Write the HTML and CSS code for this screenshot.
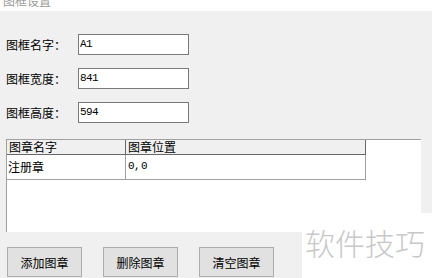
FILE: index.html
```html
<!DOCTYPE html>
<html lang="zh-CN">
<head>
  <meta charset="UTF-8">
  <title>图框设置</title>
  <link rel="stylesheet" href="styles.css">
</head>
<body>
  <div class="titlebar"><span class="title">图框设置</span></div>

  <div class="form">
    <div class="row">
      <label>图框名字：</label>
      <div class="input">A1</div>
    </div>
    <div class="row">
      <label>图框宽度：</label>
      <div class="input">841</div>
    </div>
    <div class="row">
      <label>图框高度：</label>
      <div class="input">594</div>
    </div>
  </div>

  <div class="listview">
    <div class="grid">
      <div class="head">图章名字</div>
      <div class="head last">图章位置</div>
      <div class="cell">注册章</div>
      <div class="cell last">0, 0</div>
    </div>
  </div>

  <div class="buttons">
    <button>添加图章</button>
    <button>删除图章</button>
    <button>清空图章</button>
  </div>

  <div class="watermark">软件技巧</div>
</body>
</html>
```

FILE: styles.css
```css
body {
  margin: 0;
  width: 432px;
  height: 278px;
  overflow: hidden;
  background-color: #f0f0f0;
  font-family: "Noto Sans CJK SC", sans-serif;
  font-size: 12px;
  color: #000;
  position: relative;
}
.titlebar {
  height: 11px;
  background-color: #fff;
  overflow: hidden;
  padding-left: 3px;
}
.title {
  display: block;
  margin-top: -6px;
  line-height: 14px;
  color: #9a9a9a;
}
.form {
  display: flex;
  flex-direction: column;
  gap: 13px;
  padding: 23px 0 0 6px;
}
.row {
  display: flex;
  align-items: center;
  height: 21px;
}
.row label {
  width: 72px;
}
.input {
  box-sizing: border-box;
  width: 111px;
  height: 21px;
  border: 1px solid #7a7a7a;
  background-color: #fff;
  padding: 0 1px;
  font-family: "Liberation Mono", monospace;
  font-size: 11px;
  letter-spacing: -0.6px;
  line-height: 19px;
}
.listview {
  box-sizing: border-box;
  margin: 16px 0 0 6px;
  width: 415px;
  height: 93px;
  background-color: #fff;
  border-top: 1px solid #a0a0a0;
  border-left: 1px solid #a0a0a0;
}
.grid {
  display: grid;
  grid-template-columns: 119px 240px;
  grid-template-rows: 15px 25px;
}
.head {
  background-color: #f0f0f0;
  border-bottom: 1px solid #696969;
  border-right: 1px solid #696969;
  padding-left: 2px;
  line-height: 14px;
}
.cell {
  border-bottom: 1px solid #a0a0a0;
  border-right: 1px solid #a0a0a0;
  padding-left: 1px;
  line-height: 23px;
}
.cell.last {
  font-family: "Liberation Mono", monospace;
  font-size: 11px;
  letter-spacing: -0.6px;
  word-spacing: -5px;
  padding-left: 2px;
}
.buttons {
  display: flex;
  gap: 21px;
  padding: 15px 0 0 7px;
}
button {
  box-sizing: border-box;
  width: 75px;
  height: 30px;
  background-color: #e1e1e1;
  border: 1px solid #adadad;
  font-family: "Noto Sans CJK SC", sans-serif;
  font-size: 12px;
  color: #000;
  padding: 0;
}
.watermark {
  position: absolute;
  left: 302px;
  top: 213px;
  width: 130px;
  height: 65px;
  background-color: #fff;
  color: #c8c8c8;
  font-size: 30px;
  font-weight: 300;
  line-height: 58px;
  padding-left: 3px;
  box-sizing: border-box;
  white-space: nowrap;
}
```
